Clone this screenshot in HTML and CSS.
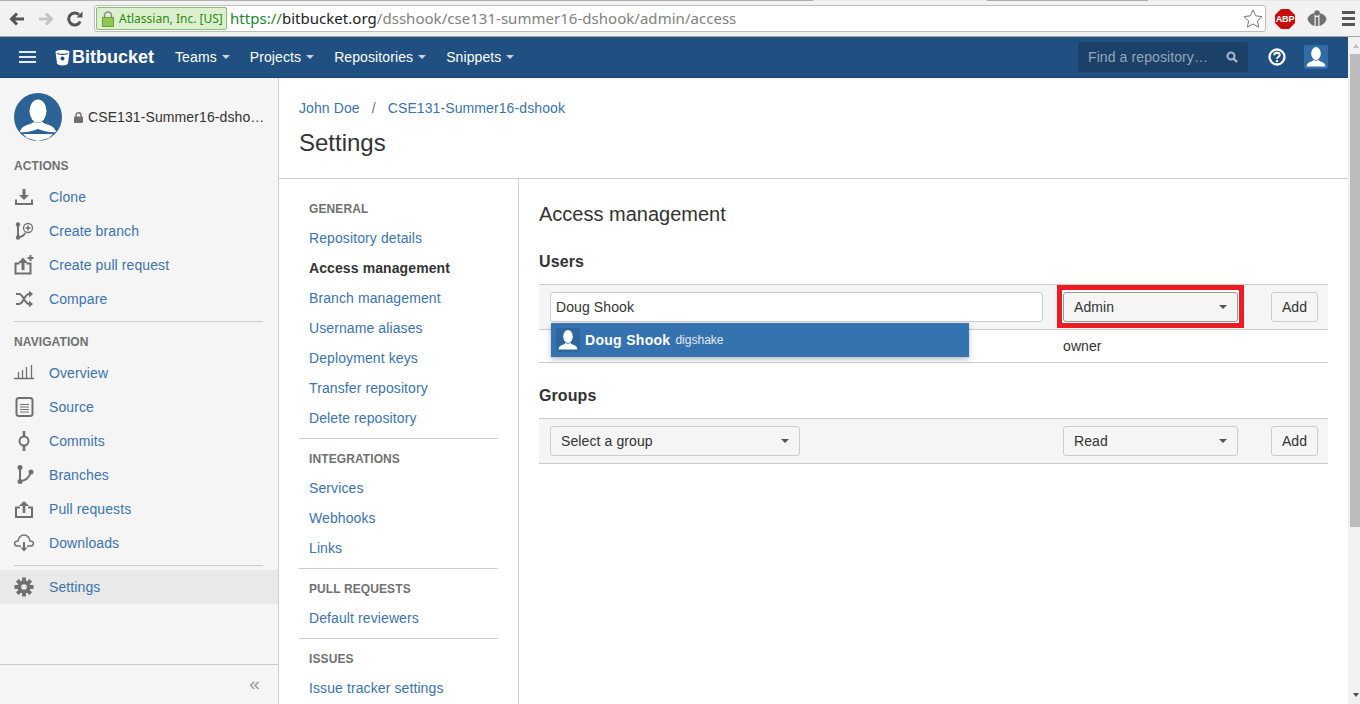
FILE: index.html
```html
<!doctype html>
<html lang="en">
<head>
    <meta charset="utf-8">
    <title>Access management - Bitbucket</title>
    <link rel="stylesheet" href="styles.css">
</head>
<body>
    <svg class="defs" width="0" height="0">
        <symbol id="person" viewBox="0 0 24 24">
            <ellipse cx="12" cy="8.500" rx="4.800" ry="6.400" fill="#fff"/>
            <path d="M2.500 21.500c.3-3 2-4.200 4.800-5 1-.3 2-.8 2.500-1.700.6.500 1.400.9 2.200.9s1.600-.4 2.200-.9c.5.9 1.500 1.400 2.500 1.700 2.800.8 4.500 2 4.800 5z" fill="#fff"/>
        </symbol>
    </svg>

    <div class="browser">
        <div class="tabstrip"></div>
        <div class="toolbar">
            <svg class="tool" width="16" height="16" viewBox="0 0 16 16"><path d="M15 8H3M8 2.500 2.500 8 8 13.500" fill="none" stroke="#555" stroke-width="3"/></svg>
            <svg class="tool" width="16" height="16" viewBox="0 0 16 16"><path d="M1 8h12M8 2.500 13.500 8 8 13.500" fill="none" stroke="#c4c4c4" stroke-width="3"/></svg>
            <svg class="tool" width="16" height="16" viewBox="0 0 16 16"><path d="M13.200 10.500A6 6 0 1 1 12 3.800" fill="none" stroke="#555" stroke-width="3"/><path d="M9.500 6.500H15.500V.5z" fill="#555"/></svg>
            <div class="omnibox">
                <div class="ev">
                    <svg width="12" height="16" viewBox="0 0 12 16"><path d="M2.500 7V4.500a3.500 3.500 0 0 1 7 0V7" fill="none" stroke="#888" stroke-width="1.600"/><rect x=".5" y="6.500" width="11" height="9" fill="#8ec654" stroke="#6f9f3c"/></svg>
                    <span>Atlassian, Inc. [US]</span>
                </div>
                <div class="url"><span class="scheme">https://</span><span class="host">bitbucket.org</span><span class="path">/dsshook/cse131-summer16-dshook/admin/access</span></div>
                <svg class="star" width="20" height="19" viewBox="0 0 20 19"><path d="m10 1 2.700 5.800 6.300.8-4.600 4.300 1.200 6.200L10 15l-5.600 3.100 1.200-6.200L1 7.600l6.300-.8z" fill="#fff" stroke="#777"/></svg>
            </div>
            <div class="abp"><svg width="20" height="20" viewBox="0 0 20 20"><path d="M6 0h8l6 6v8l-6 6H6l-6-6V6z" fill="#c70d0c"/></svg><b>ABP</b></div>
            <svg class="ext" width="20" height="17" viewBox="0 0 20 17"><path d="M7.500 3C4.500 3.500 1.500 5.500.5 8.500 1 12 4 15 7.500 16zM12.500 3c3 .5 6 2.500 7 5.500-.5 3.500-3.500 6.500-7 7.500z" fill="#707070"/><circle cx="10" cy="3" r="2.800" fill="#707070"/><path d="M8.700 7h2.600v9H8.700z" fill="#707070"/></svg>
            <div class="menu"><i></i><i></i><i></i></div>
        </div>
    </div>

    <div class="app">
        <div class="page">
            <header class="topbar">
                <div class="burger"><i></i><i></i><i></i></div>
                <a class="logo">
                    <svg width="15" height="17" viewBox="0 0 15 17"><path d="M.5 2.500C2 .5 13 .5 14.500 2.500L13 14.500c-1 2.500-10 2.500-11 0z" fill="#fff"/><path d="M2 4.500c3 1 8 1 11 0" fill="none" stroke="#205081" stroke-width="1.200"/><circle cx="7.500" cy="9.500" r="2" fill="#205081"/></svg>
                    <span>Bitbucket</span>
                </a>
                <nav class="topnav">
                    <a>Teams<i class="caret"></i></a>
                    <a>Projects<i class="caret"></i></a>
                    <a>Repositories<i class="caret"></i></a>
                    <a>Snippets<i class="caret"></i></a>
                </nav>
                <div class="search">
                    <span>Find a repository&hellip;</span>
                    <svg width="12" height="12" viewBox="0 0 12 12"><circle cx="5" cy="5" r="3.500" fill="none" stroke="#a9b9cb" stroke-width="2"/><path d="m7.500 7.500 3.500 3.500" stroke="#a9b9cb" stroke-width="2.400"/></svg>
                </div>
                <svg class="help" width="18" height="18" viewBox="0 0 18 18"><circle cx="9" cy="9" r="7.500" fill="none" stroke="#fff" stroke-width="2.300"/><path d="M6.300 7.200C6.300 5.700 7.500 4.800 9 4.800s2.700.9 2.700 2.300c0 1.800-2.700 1.900-2.700 3.700" fill="none" stroke="#fff" stroke-width="2"/><rect x="8" y="12" width="2" height="2" fill="#fff"/></svg>
                <div class="me"><svg width="24" height="24"><use href="#person"/></svg></div>
            </header>

            <div class="columns">
                <aside class="sidebar">
                    <div class="repo">
                        <svg class="repo-avatar" width="48" height="48" viewBox="0 0 48 48">
                            <circle cx="24" cy="24" r="24" fill="#2c6397"/>
                            <ellipse cx="24" cy="18" rx="8.500" ry="11.500" fill="#fff"/>
                            <path d="M6 39c1-5 6-7 10-8 2-.5 3-1.500 4-2.500 2.500 2 5.500 2 8 0 1 1 2 2 4 2.500 4 1 9 3 10 8-6 1-12-1-18-3-6 2-12 4-18 3z" fill="#fff"/>
                            <path d="M9 41h30l-4 4-11 3-11-3z" fill="#fff"/>
                        </svg>
                        <svg class="repo-lock" width="9" height="11" viewBox="0 0 9 11"><path d="M2 5V3.300a2.500 2.500 0 0 1 5 0V5" fill="none" stroke="#707070" stroke-width="1.400"/><rect y="4.500" width="9" height="6.500" rx="1" fill="#707070"/></svg>
                        <span class="repo-name">CSE131-Summer16-dshook</span>
                    </div>

                    <h5 class="side-heading side-first">Actions</h5>
                    <a class="side-item">
                        <svg class="ic" viewBox="0 0 20 20"><path d="M10 2v8" stroke-width="3"/><path d="M5 8h10l-5 5z" class="solid"/><path d="M2 12.500V17h16v-4.500" stroke-width="2"/></svg>
                        Clone
                    </a>
                    <a class="side-item">
                        <svg class="ic" viewBox="0 0 20 20"><circle cx="4" cy="3.500" r="2.200" class="solid"/><circle cx="4" cy="16.500" r="2.200" class="solid"/><path d="M4 4v12c3 0 6-1 7-4" stroke-width="2"/><circle cx="14" cy="7" r="4.500" stroke-width="1.300"/><path d="M11.500 7h5M14 4.500v5" stroke-width="1.500"/></svg>
                        Create branch
                    </a>
                    <a class="side-item">
                        <svg class="ic" viewBox="0 0 20 20"><path d="M5.500 8.500H1.500V18.500h15V8.500H12.500" stroke-width="2"/><path d="M9 15V6" stroke-width="3"/><path d="M4 8l5-5.500L14 8z" class="solid"/><path d="M16.500 0v6M13.500 3h6" stroke-width="2"/></svg>
                        Create pull request
                    </a>
                    <a class="side-item">
                        <svg class="ic" viewBox="0 0 20 20"><path d="M2 5h3c4.500 0 5.500 10 10 10h1M2 15h3c4.500 0 5.500-10 10-10h1" stroke-width="2"/><path d="M15 1.500 19 5l-4 3.500zM15 11.500l4 3.500-4 3.500z" class="solid"/></svg>
                        Compare
                    </a>
                    <div class="side-rule"></div>

                    <h5 class="side-heading">Navigation</h5>
                    <a class="side-item">
                        <svg class="ic" viewBox="0 0 20 20"><path d="M0 15.500h20M4.500 15V9M8.500 15V7M12.500 15V4M17.500 15V2" stroke-width="1.300"/></svg>
                        Overview
                    </a>
                    <a class="side-item">
                        <svg class="ic" viewBox="0 0 20 20"><rect x="2.500" y="1" width="16" height="18" rx="2.500" stroke-width="2"/><path d="M6 7.500h9M6 10h9M6 12.500h9M6 15h9" stroke-width="1"/></svg>
                        Source
                    </a>
                    <a class="side-item">
                        <svg class="ic" viewBox="0 0 20 20"><circle cx="10" cy="10" r="4.500" stroke-width="2"/><path d="M10 0v5.500M10 14.500V20" stroke-width="2.600"/></svg>
                        Commits
                    </a>
                    <a class="side-item">
                        <svg class="ic" viewBox="0 0 20 20"><circle cx="6" cy="2.500" r="2.500" class="solid"/><circle cx="6" cy="16.500" r="2.500" class="solid"/><circle cx="17" cy="7" r="2.500" class="solid"/><path d="M6 3v13c5 0 9-3 11-9" stroke-width="2"/></svg>
                        Branches
                    </a>
                    <a class="side-item">
                        <svg class="ic" viewBox="0 0 20 20"><path d="M6 8.500H2V18h16V8.500h-4" stroke-width="2"/><path d="M10 14V5" stroke-width="2.600"/><path d="M5 7l5-5 5 5z" class="solid"/></svg>
                        Pull requests
                    </a>
                    <a class="side-item">
                        <svg class="ic" viewBox="0 0 20 20"><path d="M7 13H4C2 13 .5 11.800.5 10.500S2 8 4 8c.3-3.500 3-6 6-6s5.700 2.500 6 6c2 0 3.500 1.200 3.500 2.500S18 13 16 13h-3" stroke-width="1.500"/><path d="M10 9v7" stroke-width="2"/><path d="M6.500 14.500h7L10 18.500z" class="solid"/></svg>
                        Downloads
                    </a>
                    <div class="side-rule side-rule-tight"></div>
                    <a class="side-item side-active">
                        <svg class="ic" viewBox="0 0 20 20"><path d="M10 .5v19M.5 10h19M3.300 3.300l13.400 13.400M16.700 3.300 3.300 16.700" stroke-width="3.800"/><circle cx="10" cy="10" r="6.500" class="solid"/><circle cx="10" cy="10" r="2.800" class="hole"/></svg>
                        Settings
                    </a>

                    <div class="side-foot">&laquo;</div>
                </aside>

                <main class="main">
                    <div class="page-head">
                        <div class="crumbs"><a>John Doe</a><span>/</span><a>CSE131-Summer16-dshook</a></div>
                        <h1>Settings</h1>
                    </div>
                    <div class="settings">
                        <nav class="settings-nav">
                            <h5>General</h5>
                            <a>Repository details</a>
                            <a class="current">Access management</a>
                            <a>Branch management</a>
                            <a>Username aliases</a>
                            <a>Deployment keys</a>
                            <a>Transfer repository</a>
                            <a>Delete repository</a>
                            <div class="nav-rule"></div>
                            <h5>Integrations</h5>
                            <a>Services</a>
                            <a>Webhooks</a>
                            <a>Links</a>
                            <div class="nav-rule"></div>
                            <h5>Pull requests</h5>
                            <a>Default reviewers</a>
                            <div class="nav-rule"></div>
                            <h5>Issues</h5>
                            <a>Issue tracker settings</a>
                        </nav>

                        <section class="content">
                            <h2>Access management</h2>

                            <h3 class="users-title">Users</h3>
                            <div class="add-row">
                                <div class="text-field">Doug Shook</div>
                                <div class="marked"><div class="select">Admin<i class="caret"></i></div></div>
                                <button class="add">Add</button>
                                <div class="suggest">
                                    <div class="suggest-avatar"><svg width="24" height="24"><use href="#person"/></svg></div>
                                    <b>Doug Shook</b>
                                    <span>digshake</span>
                                </div>
                            </div>
                            <div class="user-row"><span>owner</span></div>

                            <h3 class="groups-title">Groups</h3>
                            <div class="add-row">
                                <div class="select select-group">Select a group<i class="caret"></i></div>
                                <div class="select">Read<i class="caret"></i></div>
                                <button class="add">Add</button>
                            </div>
                        </section>
                    </div>
                </main>
            </div>
        </div>

        <div class="scrollbar">
            <i class="arrow-up"></i>
            <div class="thumb"></div>
            <i class="arrow-down"></i>
        </div>
    </div>
</body>
</html>
```

FILE: styles.css
```css
html, body{
    margin: 0;
    padding: 0;
    height: 100%;
    overflow: hidden;
    background: #fff;
}
body{
    font-family: "Liberation Sans", Arial, sans-serif;
    font-size: 14px;
    line-height: 20px;
    letter-spacing: .1px;
    color: #333;
}
a{
    color: #3b73af;
    text-decoration: none;
}
.defs{
    display: block;
    height: 0;
}

/* browser chrome */
.browser{
    height: 37px;
    box-sizing: border-box;
    background: #f2f2f2;
    border-bottom: 1px solid #a8a8a8;
    letter-spacing: 0;
}
.tabstrip{
    height: 1px;
    background: linear-gradient(to right, #b0b0b0 813px, #e8e8e8 813px, #e8e8e8 987px, #a9adb8 987px, #a9adb8 1148px, #e8e8e8 1148px);
}
.toolbar{
    display: flex;
    align-items: center;
    height: 35px;
    padding-left: 9px;
}
.tool{
    margin-right: 13px;
    flex: none;
}
.tool:nth-child(3){
    margin-right: 11px;
}
.omnibox{
    display: flex;
    align-items: center;
    width: 1172px;
    height: 27px;
    box-sizing: border-box;
    background: #fff;
    border: 1px solid #bdbdbd;
    border-radius: 3px;
    padding-left: 1px;
    flex: none;
    font-family: "Noto Sans", sans-serif;
}
.ev{
    display: flex;
    align-items: center;
    width: 131px;
    height: 23px;
    box-sizing: border-box;
    background: #dcf0cf;
    border: 1px solid #86bd72;
    border-radius: 2px;
    padding-left: 5px;
    color: #2b8a0e;
    font-size: 12px;
}
.ev span{
    margin-left: 5px;
    white-space: nowrap;
}
.url{
    margin-left: 3px;
    padding-bottom: 2px;
    font-size: 15px;
    letter-spacing: .03px;
    white-space: nowrap;
}
.scheme{
    color: #1a8a2a;
}
.host{
    color: #222;
}
.path{
    color: #808080;
}
.star{
    margin-left: auto;
    margin-right: 2px;
}
.abp{
    position: relative;
    width: 20px;
    height: 20px;
    margin-left: 9px;
    flex: none;
}
.abp b{
    position: absolute;
    left: 0;
    right: 0;
    top: 0;
    color: #fff;
    font-family: "Liberation Sans", sans-serif;
    font-size: 9px;
    letter-spacing: -.2px;
    text-align: center;
}
.ext{
    margin-left: 12px;
    flex: none;
}
.menu{
    margin-left: 15px;
    width: 13px;
    flex: none;
}
.menu i{
    display: block;
    height: 3px;
    background: #555;
    margin: 3px 0;
}

/* layout */
.app{
    display: flex;
    height: 667px;
}
.page{
    width: 1348px;
    display: flex;
    flex-direction: column;
    flex: none;
}
.scrollbar{
    position: relative;
    width: 12px;
    background: #f1f1f1;
}
.thumb{
    position: absolute;
    left: 2px;
    right: 0;
    top: 17px;
    height: 473px;
    background: #bcbcbc;
}
.arrow-up, .arrow-down{
    position: absolute;
    left: 5px;
    width: 0;
    height: 0;
    border-left: 3.500px solid transparent;
    border-right: 3.500px solid transparent;
}
.arrow-up{
    top: 7px;
    border-bottom: 4px solid #bbb;
}
.arrow-down{
    bottom: 7px;
    border-top: 4px solid #505050;
}

/* top bar */
.topbar{
    display: flex;
    align-items: center;
    height: 41px;
    box-sizing: border-box;
    background: #205081;
    border-bottom: 1px solid #1a4169;
    padding: 0 20px 0 19px;
    flex: none;
}
.burger{
    width: 17px;
}
.burger i{
    display: block;
    height: 2px;
    background: #e6ecf2;
    margin: 3px 0;
}
.logo{
    display: flex;
    align-items: center;
    margin-left: 19px;
    color: #fff;
    font-weight: bold;
    font-size: 18px;
    letter-spacing: 0;
}
.logo span{
    margin-left: 2px;
}
.topnav{
    display: flex;
    margin-left: 21px;
}
.topnav a{
    color: #fff;
    display: flex;
    align-items: center;
    margin-right: 20px;
}
.caret{
    width: 0;
    height: 0;
    margin-left: 5px;
    border-left: 4px solid transparent;
    border-right: 4px solid transparent;
    border-top: 4px solid #ccd6e2;
}
.search{
    display: flex;
    align-items: center;
    justify-content: space-between;
    width: 170px;
    height: 30px;
    box-sizing: border-box;
    margin-left: auto;
    padding: 0 10px;
    background: #1b4168;
    border-radius: 3px;
    color: #93a6bc;
}
.help{
    margin-left: 20px;
}
.me{
    width: 24px;
    height: 24px;
    margin-left: 18px;
    background: #326ca6;
    border-radius: 2px;
}

.columns{
    display: flex;
    flex: 1;
    min-height: 0;
}

/* repo sidebar */
.sidebar{
    width: 279px;
    box-sizing: border-box;
    background: #f5f5f5;
    border-right: 1px solid #ccc;
    display: flex;
    flex-direction: column;
    flex: none;
}
.repo{
    display: flex;
    align-items: center;
    padding: 15px 13px 0 14px;
}
.repo-avatar{
    flex: none;
}
.repo-lock{
    margin-left: 12px;
    margin-right: 5px;
    flex: none;
}
.repo-name{
    max-width: 176.600px;
    white-space: nowrap;
    overflow: hidden;
    text-overflow: ellipsis;
}
.side-heading{
    margin: 10px 14px 4px 14px;
    font-size: 12px;
    line-height: 20px;
    font-weight: bold;
    text-transform: uppercase;
    color: #707070;
}
.side-first{
    margin-top: 15px;
}
.side-item{
    display: flex;
    align-items: center;
    height: 34px;
    padding-left: 14px;
}
.ic{
    width: 20px;
    height: 20px;
    margin-right: 15px;
    fill: none;
    stroke: #707070;
    flex: none;
}
.ic .solid{
    fill: #707070;
    stroke: none;
}
.ic .hole{
    fill: #e9e9e9;
    stroke: none;
}
.side-rule{
    height: 1px;
    background: #ccc;
    margin: 5px 15px 0 14px;
}
.side-rule-tight{
    margin-bottom: 4px;
}
.side-active{
    background: #e9e9e9;
}
.side-foot{
    margin-top: auto;
    height: 40px;
    box-sizing: border-box;
    border-top: 1px solid #ccc;
    padding-right: 18px;
    text-align: right;
    line-height: 38px;
    font-size: 19px;
    color: #999;
}

/* main column */
.main{
    flex: 1;
    min-width: 0;
    display: flex;
    flex-direction: column;
}
.page-head{
    height: 101px;
    box-sizing: border-box;
    padding: 20px 20px 0 20px;
    border-bottom: 1px solid #ccc;
    flex: none;
}
.crumbs span{
    margin: 0 12px;
    color: #707070;
}
h1{
    margin: 10px 0 0 0;
    font-size: 24px;
    line-height: 30px;
    font-weight: normal;
    letter-spacing: 0;
}
.settings{
    display: flex;
    flex: 1;
    min-height: 0;
    overflow: hidden;
}
.settings-nav{
    width: 240px;
    box-sizing: border-box;
    padding: 20px 20px 0 20px;
    border-right: 1px solid #ccc;
    flex: none;
}
.settings-nav h5{
    margin: 0 0 4px 0;
    padding-left: 10px;
    font-size: 12px;
    line-height: 20px;
    font-weight: bold;
    text-transform: uppercase;
    color: #707070;
}
.settings-nav a{
    display: block;
    height: 30px;
    line-height: 30px;
    padding-left: 10px;
    white-space: nowrap;
}
.settings-nav a.current{
    color: #333;
    font-weight: bold;
}
.nav-rule{
    height: 1px;
    background: #ccc;
    margin: 5px 0 10px 0;
}
.content{
    flex: 1;
    min-width: 0;
    padding: 21px 20px 0 20px;
}
h2{
    margin: 0;
    font-size: 20px;
    line-height: 28px;
    font-weight: normal;
    letter-spacing: 0;
}
h3{
    margin: 0 0 12px 0;
    font-size: 16px;
    line-height: 20px;
    font-weight: bold;
}
.users-title{
    margin-top: 24px;
}
.groups-title{
    margin-top: 23px;
}
.add-row{
    position: relative;
    display: grid;
    grid-template-columns: 493px 175px 47px;
    column-gap: 20px;
    align-items: center;
    height: 46px;
    box-sizing: border-box;
    padding: 0 10px 0 11px;
    background: #f5f5f5;
    border-top: 1px solid #ccc;
    border-bottom: 1px solid #ccc;
}
.text-field{
    height: 30px;
    box-sizing: border-box;
    background: #fff;
    border: 1px solid #ccc;
    border-radius: 3px;
    padding: 0 5px;
    line-height: 28px;
}
.select{
    display: flex;
    align-items: center;
    justify-content: space-between;
    height: 30px;
    box-sizing: border-box;
    padding: 0 10px;
    background: #f5f5f5;
    border: 1px solid #ccc;
    border-radius: 3px;
}
.select-group{
    width: 250px;
}
.select .caret{
    border-top-color: #555;
}
.marked{
    position: relative;
    box-shadow: 0 0 0 2px #fff;
    border-radius: 3px;
}
.marked .select{
    border-color: #999;
}
.marked::after{
    content: "";
    position: absolute;
    top: -7px;
    left: -6px;
    right: -6px;
    bottom: -6px;
    border: 5px solid #ed1c24;
}
.add{
    height: 30px;
    margin-left: 13px;
    width: 47px;
    padding: 0;
    background: #f5f5f5;
    border: 1px solid #ccc;
    border-radius: 3px;
    font: inherit;
    color: #333;
}
.suggest{
    position: absolute;
    left: 12px;
    top: 38px;
    width: 418px;
    height: 34px;
    display: flex;
    align-items: center;
    padding-left: 5px;
    box-sizing: border-box;
    background: #3572b0;
    color: #fff;
    box-shadow: 0 2px 5px rgba(0, 0, 0, .3);
}
.suggest-avatar{
    width: 24px;
    height: 24px;
    background: #2d659d;
    border-radius: 2px;
}
.suggest b{
    margin-left: 5px;
    letter-spacing: .3px;
}
.suggest span{
    margin-left: 5px;
    font-size: 12px;
    letter-spacing: 0;
    color: #e3eaf4;
}
.user-row{
    height: 33px;
    box-sizing: border-box;
    border-bottom: 1px solid #ccc;
    padding-left: 524px;
    line-height: 32px;
}
```
